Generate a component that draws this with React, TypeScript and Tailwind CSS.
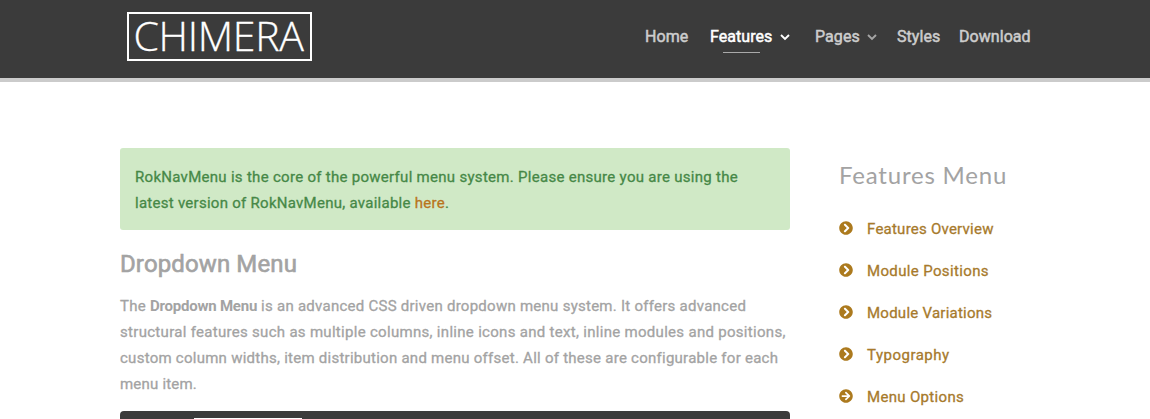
import { FaArrowCircleRight, FaChevronCircleRight } from "react-icons/fa";

function Caret({ className }: { className: string }) {
  return (
    <svg viewBox="0 0 10 7" className={`h-[7px] w-[10px] ${className}`} fill="none" stroke="currentColor" strokeWidth="1.9">
      <path d="M1 1 L5 5 L9 1" />
    </svg>
  );
}

const links = [
  { label: "Features Overview", tracking: "tracking-[0.24px]" },
  { label: "Module Positions", tracking: "tracking-[0.36px]" },
  { label: "Module Variations", tracking: "tracking-[0.25px]" },
  { label: "Typography", tracking: "tracking-[0.5px]" },
  { label: "Menu Options", tracking: "tracking-[0.32px]", arrow: true },
];

export default function App() {
  return (
    <div className="h-[419px] w-[1150px] overflow-hidden bg-white font-['Roboto',sans-serif] text-[15px] font-normal tracking-[0.29px] text-[#a3a3a3] [-webkit-text-stroke:0.3px_currentColor]">
      <header className="flex h-[82px] items-start border-b-4 border-[#cbcbcb] bg-[#3b3b3b] pl-[127px]">
        <div className="mt-[12px] flex h-[49px] w-[185px] items-center justify-center border-2 border-white pr-[2px] pb-[3px] font-['Open_Sans',sans-serif] text-[41px] leading-none font-light tracking-[-0.3px] whitespace-nowrap text-white">
          CHIMERA
        </div>
        <nav className="mt-[25px] ml-[333px] flex text-base leading-6 tracking-[0.06px] whitespace-nowrap text-[#cdcdcd] [-webkit-text-stroke:0.5px_currentColor]">
          <a className="w-[65px]">Home</a>
          <a className="relative flex w-[105px] text-white">
            <span className="w-[70px]">Features</span>
            <Caret className="mt-[9px]" />
            <span className="absolute top-[27px] left-[13px] h-px w-[37px] bg-[#a9a9a9]" />
          </a>
          <a className="flex w-[82px]">
            <span className="w-[52px]">Pages</span>
            <Caret className="mt-[9px] text-[#a5a5a5]" />
          </a>
          <a className="w-[62px]">Styles</a>
          <a>Download</a>
        </nav>
      </header>
      <div className="flex pl-[120px]">
        <main className="mt-[66px] w-[670px]">
          <div className="h-[82px] rounded-[3px] bg-[#d0e9c6] px-[15px] py-[16px] leading-[26px] whitespace-nowrap text-[#468847]">
            <p>RokNavMenu is the core of the powerful menu system. Please ensure you are using the</p>
            <p className="tracking-[0.27px]">
              latest version of RokNavMenu, available <a className="text-[#b9751c]">here</a>.
            </p>
          </div>
          <h2 className="mt-[18px] text-2xl leading-8 tracking-[0.12px] [-webkit-text-stroke:0.6px_currentColor]">Dropdown Menu</h2>
          <div className="mt-[13px] leading-[26px] whitespace-nowrap">
            <p className="tracking-[0.26px]">
              The <strong className="font-bold tracking-[-0.22px] [-webkit-text-stroke:0]">Dropdown Menu</strong> is an advanced CSS driven dropdown menu system. It offers advanced
            </p>
            <p className="tracking-[0.3px]">structural features such as multiple columns, inline icons and text, inline modules and positions,</p>
            <p className="tracking-[0.257px]">custom column widths, item distribution and menu offset. All of these are configurable for each</p>
            <p className="tracking-[0.2px]">menu item.</p>
          </div>
          <div className="mt-[14px] flex h-[60px] rounded-[4px] bg-[#3b3b3b] pt-[7px] pl-[74px]">
            <div className="h-[40px] w-[108px] bg-white" />
          </div>
        </main>
        <aside className="mt-[77px] ml-[49px]">
          <h3 className="font-['Lato',sans-serif] text-2xl leading-8 font-normal tracking-[0.8px] [-webkit-text-stroke:0]">Features Menu</h3>
          <ul className="mt-[16px] text-[#a77a2c]">
            {links.map(({ label, tracking, arrow }) => (
              <li key={label} className="flex h-[42px] items-center">
                {arrow ? <FaArrowCircleRight className="size-[14px] text-[#ac7a1e]" /> : <FaChevronCircleRight className="size-[14px] text-[#ac7a1e]" />}
                <span className={`ml-[14px] pt-[2px] ${tracking}`}>{label}</span>
              </li>
            ))}
          </ul>
        </aside>
      </div>
    </div>
  );
}
